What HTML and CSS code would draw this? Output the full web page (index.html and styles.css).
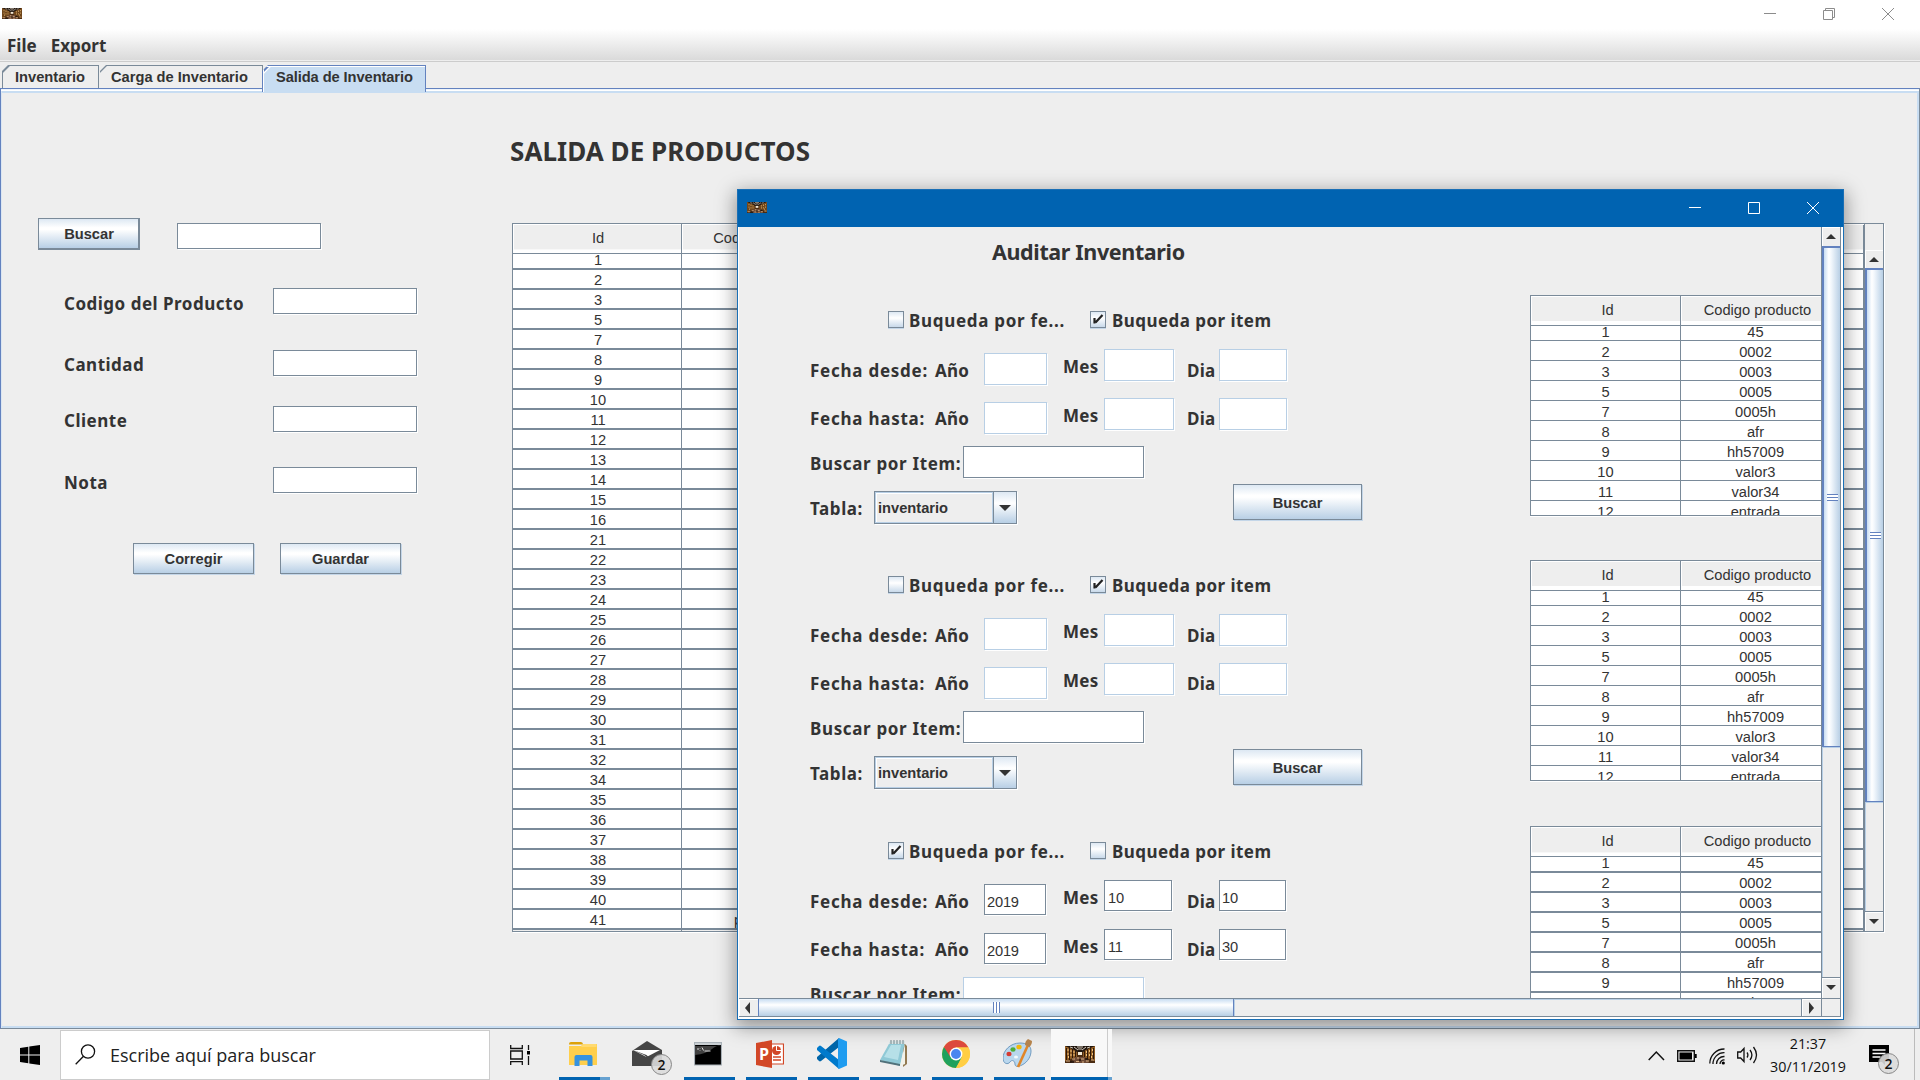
FILE: index.html
```html
<!DOCTYPE html>
<html lang="es">
<head>
<meta charset="utf-8">
<title>Inventario</title>
<link rel="stylesheet" href="styles.css">
</head>
<body>
<svg class="defs" width="0" height="0" aria-hidden="true">
  <defs>
    <symbol id="photo" viewBox="0 0 30 17" preserveAspectRatio="none">
      <rect width="30" height="17" fill="#4a2b12"/>
      <path d="M0 0l12 5v6L0 15zM30 0L18 5v6l12 4z" fill="#9a6427"/>
      <path d="M0 0h30l-8 3-4 3h-6L8 3z" fill="#1f150e"/>
      <path d="M1.500 2v12M4.500 2v12M7.500 3v10M10.500 5v7M28.500 2v12M25.500 2v12M22.500 3v10M19.500 5v7" stroke="#2e190b" stroke-width="1.200"/>
      <path d="M2.500 4h1M5.500 5h1M8.500 6h1M2.500 8h1M5.500 9h1M8.500 9h1M21 6h1M24 5h1M27 4h1M21 9h1M24 9h1M27 8h1M3 11h1M26 11h1" stroke="#f0c27c" stroke-width="2"/>
      <path d="M9 1l4 3M21 1l-4 3M13 3h4M12 1h6M5 1l3 1M25 1l-3 1" stroke="#e9dfd0" stroke-width=".9"/>
      <path d="M13 6h4v3h-4z" fill="#f3ead6"/>
      <path d="M10 11h10l4 6H6z" fill="#6d4a35"/>
      <path d="M1 15h4M7 13h3M12 12h2M16 13h3M21 15h3M26 14h3M11 15.500h3M17 16h2" stroke="#d8b083" stroke-width="1.200"/>
      <path d="M5 16h4M14 14h2M20 13h3" stroke="#20130b" stroke-width="1.500"/>
    </symbol>
  </defs>
</svg>

<main class="window">
  <header class="titlebar">
    <svg class="title-icon" width="20" height="11"><use href="#photo"/></svg>
    <div class="window-buttons">
      <svg width="12" height="12" viewBox="0 0 12 12"><path d="M0 5.5h12"/></svg>
      <svg width="12" height="12" viewBox="0 0 12 12"><path d="M.5 2.500h9v9h-9zM2.500 2V.5h9v9H10"/></svg>
      <svg width="12" height="12" viewBox="0 0 12 12"><path d="M0 0l12 12M12 0L0 12"/></svg>
    </div>
  </header>
  <nav class="menubar"><span>File</span><span>Export</span></nav>
  <div class="tabs">
    <div class="tab tab-first">Inventario</div>
    <div class="tab tab-second">Carga de Inventario</div>
    <div class="tab tab-active">Salida de Inventario</div>
  </div>

  <div class="panel">
    <form class="entry-form">
      <div class="entry-search"><button type="button" class="btn btn-default">Buscar</button><span class="field"></span></div>
      <div class="entry-row row-code"><label>Codigo del Producto</label><span class="field"></span></div>
      <div class="entry-row row-amount"><label>Cantidad</label><span class="field"></span></div>
      <div class="entry-row row-client"><label>Cliente</label><span class="field"></span></div>
      <div class="entry-row row-note"><label>Nota</label><span class="field"></span></div>
      <div class="entry-actions"><button type="button" class="btn">Corregir</button><button type="button" class="btn">Guardar</button></div>
    </form>

    <section class="products">
      <h1>SALIDA DE PRODUCTOS</h1>
      <div class="product-scroll">
        <div class="product-table" id="products"></div>
        <div class="vscroll product-bar">
          <div class="corner"></div>
          <div class="arrow"><i class="tri up"></i></div>
          <div class="thumb"><i class="grip"></i></div>
          <div class="track"></div>
          <div class="arrow arrow-end"><i class="tri down"></i></div>
        </div>
      </div>
    </section>
  </div>
</main>

<div class="dialog">
  <header class="dialog-title">
    <svg class="title-icon" width="20" height="11"><use href="#photo"/></svg>
    <div class="window-buttons">
      <svg width="12" height="12" viewBox="0 0 12 12"><path d="M0 5.500h12"/></svg>
      <svg width="12" height="12" viewBox="0 0 12 12"><path d="M.5.5h11v11H.5z"/></svg>
      <svg width="12" height="12" viewBox="0 0 12 12"><path d="M0 0l12 12M12 0L0 12"/></svg>
    </div>
  </header>
  <div class="dialog-body">
    <div class="viewport">
      <h2>Auditar Inventario</h2>
      <div id="audits"></div>
    </div>
    <div class="vscroll dialog-v">
      <div class="arrow"><i class="tri up"></i></div>
      <div class="thumb"><i class="grip"></i></div>
      <div class="track"></div>
      <div class="arrow arrow-end"><i class="tri down"></i></div>
    </div>
    <div class="hscroll">
      <div class="arrow"><i class="tri left"></i></div>
      <div class="thumb"><i class="grip"></i></div>
      <div class="track"></div>
      <div class="arrow arrow-end"><i class="tri right"></i></div>
    </div>
    <div class="scroll-corner"></div>
  </div>
</div>

<footer class="taskbar">
  <div class="start"><svg width="20" height="20" viewBox="0 0 20 20"><path d="M0 3l8.300-1.200v7.700H0zM9.300 1.600L20 0v9.500H9.300zM0 10.500h8.300v7.800L0 17zM9.300 10.500H20V20L9.300 18.400z"/></svg></div>
  <div class="search">
    <svg width="21" height="21" viewBox="0 0 21 21"><circle cx="13" cy="7.500" r="6.600"/><path d="M8.500 12.300L.7 20.300"/></svg>
    <span>Escribe aquí para buscar</span>
  </div>
  <div class="task-view"><svg width="20" height="20" viewBox="0 0 20 20"><path d="M.7 0v3.500h11.600V0M.7 6h11.600v8H.7zM.7 20v-3.300h11.600V20M18.500 0v5M18.500 11v9"/><path d="M17 6h3v3.500h-3z" fill="#000" stroke="none"/></svg></div>

  <div class="app app-folder running grouped">
    <svg width="28" height="24" viewBox="0 0 28 24"><path d="M0 2q0-2 2-2h10q2 0 2 2.500H0z" fill="#dca10a"/><path d="M0 4h12l2-2h14v21H0z" fill="#ffcf4c"/><path d="M14 2h13.500v3H12z" fill="#ffda70"/><path d="M5.500 24v-9q0-2 2-2h14q2 0 2 2v9h-5v-5.500h-8V24z" fill="#3592df"/></svg>
  </div>
  <div class="app app-mail">
    <svg width="32" height="26" viewBox="0 0 32 26"><path d="M0 10L15 0l15 9v16H0z" fill="#454545"/><path d="M1 9h27L14.500 16z" fill="#fff"/><path d="M1 9l13.500 5L26 25 12 14z" fill="#454545"/></svg>
    <b class="badge">2</b>
  </div>
  <div class="app running">
    <svg width="28" height="24" viewBox="0 0 28 24"><path d="M.5.5h27v22.500H.5z" fill="#000" stroke="#a9b1b7" stroke-width="1.200"/><path d="M1 1h26v2H1z" fill="#c9cfd3"/><path d="M1 13Q12 12 18 7t9-3v0H1z" fill="#414141"/><path d="M4 6v2M6 6v.5M6 8v.5M8 5.500L9.500 8.500M10.500 9h6" stroke="#ddd" fill="none"/></svg>
  </div>
  <div class="app running">
    <svg width="28" height="28" viewBox="0 0 28 28"><path d="M15 4h12.500v20H15z" fill="#fff" stroke="#d24726" stroke-width="1.200"/><path d="M17 17h8M17 20h8" stroke="#d24726" stroke-width="1.500"/><circle cx="20.500" cy="10.500" r="4.500" fill="#d24726"/><path d="M20.500 10.500V6M20.500 10.500h4.500" stroke="#fff"/><path d="M0 3l16-3v28L0 25z" fill="#d24726"/></svg>
    <b class="ppt">P</b>
  </div>
  <div class="app running">
    <svg width="30" height="31" viewBox="0 0 30 31"><path d="M22 0v9L4 23q-1 .8-2 0l-2-2q-.6-1 0-2z" fill="#0065a9"/><path d="M22 31v-9L4 8q-1-.8-2 0L0 10q-.6 1 0 2z" fill="#007acc"/><path d="M22 0l8 3.500v24L22 31q-1-1-1-2V2q0-1 1-2z" fill="#1f9cf0"/></svg>
  </div>
  <div class="app running">
    <svg width="28" height="28" viewBox="0 0 28 28"><path d="M23 2l4 4v18l-4 3z" fill="#927a52"/><path d="M10 2h15l-5 24L0 20z" fill="#8fc9d6"/><path d="M11 5h10l-3 15L4 17z" fill="#b6e0e8"/><path d="M0 20l20 4v2L0 22z" fill="#50717a"/><path d="M10 1h15v3H9z" fill="#d9e4e5"/><path d="M11 0v4M14 0v4M17 0v4M20 0v4M23 0v4" stroke="#71858a"/><path d="M25 4v20l-5 2z" fill="#f2f2ea"/></svg>
  </div>
  <div class="app running">
    <svg width="28" height="28" viewBox="0 0 28 28"><circle cx="14" cy="14" r="14" fill="#ffce44"/><path d="M14 14L1.900 7A14 14 0 0 0 14 28l6-10.500z" fill="#1fa15d"/><path d="M14 7.500h12.400A14 14 0 0 0 1.900 7L8.400 17z" fill="#dc4a3e"/><path d="M14 28a14 14 0 0 0 12.400-20.500H14L19.600 17.500z" fill="#ffce44"/><circle cx="14" cy="14" r="6.400" fill="#fff"/><circle cx="14" cy="14" r="5" fill="#4a86f0"/></svg>
  </div>
  <div class="app running">
    <svg width="30" height="29" viewBox="0 0 30 29"><path d="M17 4C7 4 0 12 0 19c0 6 5 7 7 4s5-1 5 2 3 3 7 1c6-3 9-9 9-14 0-6-5-8-11-8z" fill="#b9d7ee" stroke="#719bc0"/><ellipse cx="6" cy="15" rx="2.600" ry="2.200" fill="#d63b32"/><ellipse cx="10" cy="10.500" rx="2.600" ry="2.200" fill="#4fae3a"/><ellipse cx="16" cy="8" rx="2.700" ry="2.300" fill="#f2b70b"/><ellipse cx="13" cy="18" rx="2" ry="1.500" fill="#f4fafd"/><path d="M15 28L25 6" stroke="#e08628" stroke-width="2.600"/><path d="M22 6q0-4 3-6l4 2q0 4-3 6z" fill="#b5834c"/></svg>
  </div>
  <div class="app app-current running grouped">
    <svg width="30" height="17"><use href="#photo"/></svg>
  </div>

  <div class="tray">
    <svg width="17" height="11" viewBox="0 0 17 11"><path d="M.7 10L8.300 2l7.700 8" stroke-width="1.500"/></svg>
    <svg width="20" height="12" viewBox="0 0 20 12"><path d="M.7.7h16.600v10.600H.7z" stroke-width="1.400"/><path d="M2.500 2.500h12.500v7H2.500zM18 4h1.700v4H18z" fill="#000" stroke="none"/></svg>
    <svg width="17" height="17" viewBox="0 0 17 17"><path d="M.8 15.500A14.500 14.500 0 0 1 15.500 1M4 16A11 11 0 0 1 15.500 4.700M7.500 16a7.500 7.500 0 0 1 8-7.500M11 16a4 4 0 0 1 4.500-4"/><circle cx="14.300" cy="15" r="1.600" fill="#000" stroke="none"/></svg>
    <svg width="21" height="18" viewBox="0 0 21 18"><path d="M.7 6h3L7 2.500v13L3.700 12h-3zM10 6.500q1.800 2.500 0 5M13 4q3.800 5 0 10M16.500 1q6 8 0 16"/></svg>
    <div class="clock"><span>21:37</span><span>30/11/2019</span></div>
    <div class="notice">
      <svg width="20" height="20" viewBox="0 0 20 20"><path d="M0 0h20v17h-4v3l-3-3H0z" fill="#000" stroke="none"/><path d="M3.500 5h13M3.500 8.500h13M3.500 12h8" stroke="#fff" stroke-width="1.300"/></svg>
      <b class="badge">2</b>
    </div>
    <i class="desktop-edge"></i>
  </div>
</footer>
<script src="app.js"></script>
</body>
</html>
```
FILE: styles.css
```css
* { box-sizing: border-box; }
body {
  margin: 0; width: 1920px; height: 1080px; overflow: hidden;
  display: flex; flex-direction: column;
  background: #eee; color: #333;
  font: 14.67px/20px "Liberation Sans", Arial, sans-serif;
}
.defs { position: absolute; }
h1, h2 { margin: 0; font-family: "Noto Sans", sans-serif; font-weight: 700; white-space: nowrap; }
label, .menubar { font: 700 17px/20px "Noto Sans", sans-serif; white-space: nowrap; }
label { letter-spacing: .5px; }

/* main window frame */
.window { height: 1029px; flex: none; display: flex; flex-direction: column; }
.titlebar { height: 29px; flex: none; background: #fff; display: flex; justify-content: space-between; padding: 8px 26px 0 2px; }
.titlebar .window-buttons { gap: 47px; stroke: #8c8c8c; }
.window-buttons { display: flex; fill: none; stroke-width: 1; }
.menubar { height: 33px; flex: none; display: flex; gap: 14px; padding: 7px 0 0 7px; background: linear-gradient(#fff, #dadada 31px, #eee 31px, #eee 32px, #ccc 32px); }
.tabs { height: 26px; flex: none; display: flex; align-items: flex-end; padding-left: 2px; }
.tab { height: 23px; border: 1px solid #7a8a99; border-bottom: 0; font-weight: 700; line-height: 23px; white-space: nowrap; background: linear-gradient(135deg, #7a8a99 4.6px, #eee 5.2px); clip-path: polygon(6px 0, 100% 0, 100% 100%, 0 100%, 0 6px); }
.tab-first { width: 97px; padding-left: 12px; }
.tab-second { width: 163px; margin-left: 1px; padding-left: 11px; border-left: 0; }
.tab-active { width: 164px; height: 27px; margin: 0 0 -4px -1px; padding-left: 13px; background: linear-gradient(135deg, #6382bf 4.600px, #fff 5.200px, #fff 6px, #c8ddf2 6.500px); border-color: #6382bf; box-shadow: inset 1px 1px #fff; letter-spacing: -.08px; z-index: 1; }
.panel { flex: 1; min-height: 0; display: flex; border: 1px solid #6382bf; border-right-color: #7a8a99; border-bottom-color: #7a8a99; box-shadow: inset 0 1px #eef4fb, inset 0 2px #fff, inset 1px 0 #dbe6f2, inset 0 4px #c8ddf2, inset -2px -2px #c8ddf2; }

/* entry form */
.entry-form { width: 509px; flex: none; padding-top: 129px; }
.field { display: block; background: #fff; border: 1px solid #7a8a99; box-shadow: 1px 1px #fff; padding: 0 2px; }
.entry-form .field { width: 144px; height: 26px; }
.btn { padding: 1px 0 0; border: 1px solid #7a8a99; font: 700 14.67px/20px "Liberation Sans", Arial, sans-serif; color: #333; background: linear-gradient(#dde8f3, #fff 30%, #fff 36%, #b8cfe5); box-shadow: 1px 1px #c4d6e8; }
.btn-default { border-width: 1px 2px 2px 1px; box-shadow: none; padding-left: 1px; }
.entry-search { display: flex; height: 70px; padding-left: 37px; gap: 37px; }
.entry-search .btn { width: 102px; height: 32px; }
.entry-search .field { margin-top: 5px; }
.entry-row { display: grid; grid-template-columns: 209px 144px; padding-left: 63px; }
.entry-row label { padding-top: 6px; }
.row-code { height: 62px; }
.row-amount { height: 56px; }
.row-client { height: 61px; }
.row-client label { padding-top: 5px; }
.row-amount label { padding-top: 5px; }
.row-note { height: 76px; }
.entry-actions { display: flex; gap: 26px; padding-left: 132px; }
.entry-actions .btn { width: 121px; height: 31px; }

/* product list */
.products { padding-top: 44px; }
h1 { font-size: 26px; line-height: 36px; letter-spacing: .05px; }
.product-scroll { width: 1372px; height: 709px; margin: 54px 0 0 2px; display: flex; border: 1px solid #7a8a99; box-shadow: 1px 1px #fff; overflow: hidden; }
.product-table { width: 1352px; flex: none; border-right: 2px solid #7a8a99; }
.trow { display: grid; height: 20px; border-bottom: 2px solid #7a8a99; background: #fff; text-align: center; line-height: 21px; }
.trow span { border-right: 1px solid #7a8a99; white-space: nowrap; }
.thead { display: grid; height: 26px; text-align: center; line-height: 29px; border-bottom: 1px solid #f8f8f8; }
.thead span { border: solid #7a8a99; border-width: 0 1px 1px 0; box-shadow: inset 1px 1px #fff; white-space: nowrap; padding-left: 2px; }
.product-table .trow, .product-table .thead { grid-template-columns: repeat(8, 169px); }
.product-table .trow span:first-child { padding-left: 2px; }
.product-table .tail { padding-right: 56px; }

/* scroll bars */
.vscroll { display: flex; flex-direction: column; }
.product-bar { width: 18px; }
.corner { height: 26px; flex: none; }
.arrow { flex: none; height: 18px; display: grid; place-items: center; background: #eee; box-shadow: inset 1px 1px #fff; }
.vscroll .thumb { flex: none; display: grid; place-items: center; border: solid #6382bf; border-width: 2px 0 1px 2px; background: linear-gradient(90deg, #c8ddf2, #fff 30%, #f2f7fc 45%, #b8cfe5); }
.product-bar .thumb { height: 534px; }
.track { flex: 1; background: #eee; box-shadow: inset 1px 1px #b8cfe5; }
.vscroll .arrow-end { border-top: 1px solid #7a8a99; height: 20px; }
.tri { border: 5px solid transparent; }
.up { border-top: 0; border-bottom: 5px solid #333; }
.down { border-bottom: 0; border-top: 5px solid #333; }
.left { border-left: 0; border-right: 5px solid #333; }
.right { border-right: 0; border-left: 5px solid #333; }
.vscroll .grip { width: 11px; height: 7px; background: repeating-linear-gradient(#6382bf 0 1px, #fff 1px 3px); }

/* audit dialog, floating above the main window */
.dialog { position: absolute; left: 737px; top: 189px; width: 1107px; height: 831px; border: 1px solid #1a6fb5; background: #fff; box-shadow: 0 5px 18px 2px rgba(0, 0, 0, .38); display: flex; flex-direction: column; }
.dialog-title { height: 37px; flex: none; background: #0063b1; display: flex; justify-content: space-between; padding: 12px 24px 0 9px; }
.dialog-title .window-buttons { gap: 47px; stroke: #fff; }
.dialog-body { flex: 1; min-height: 0; display: grid; grid-template: 771px 19px / 1082px 20px; padding-left: 1px; }
.viewport { overflow: hidden; background: #eee; }
h2 { height: 84px; padding: 10px 0 0 253px; font-size: 21.5px; line-height: 30px; letter-spacing: -.37px; }
.audit { display: flex; height: 265px; }
.audit + .audit { height: 266px; }
.audit-form { width: 791px; flex: none; }
.checks { display: flex; height: 38px; padding-left: 149px; }
.check { width: 16px; height: 17px; border: 1px solid #7a8a99; background: linear-gradient(#dde8f3, #fff 40%, #c8d9ea); box-shadow: 0 1px #c4d6e8; fill: none; stroke: #222; stroke-width: 2.2; }
.checks label { line-height: 20px; padding-left: 5px; width: 186px; letter-spacing: .7px; }
.checks label:last-child { padding-left: 6px; letter-spacing: .45px; }
.date-row { display: grid; grid-template-columns: 125px 49px 79px 41px 83px 32px 68px; align-items: start; padding-left: 71px; }
.date-row label { padding-top: 12px; letter-spacing: .75px; }
.date-row label:nth-child(n+2) { letter-spacing: .25px; }
.date-row label:nth-child(4) { padding-top: 8px; }
.date-row .field { height: 32px; line-height: 34px; letter-spacing: -.2px; }
.date-row .field:nth-child(3) { width: 63px; margin-top: 4px; }
.date-row .field:nth-child(5) { width: 70px; }
.date-row .field:not(.off) { height: 31px; width: 67px; }
.date-row .field:not(.off):nth-child(3) { width: 62px; }
.date-row .field:not(.off):nth-child(5) { width: 68px; padding-left: 3px; }
.from { height: 49px; }
.to { height: 48px; }
.to label { padding-top: 11px; }
.date-row .field.off, .off { border-color: #b8cfe5; }
.item-row { display: grid; grid-template-columns: 153px 181px; height: 38px; padding-left: 71px; }
.item-row label { padding-top: 8px; letter-spacing: .65px; }
.item-row .field { height: 32px; }
.table-row { display: flex; align-items: flex-start; padding-left: 71px; }
.table-row label { width: 64px; padding-top: 15px; letter-spacing: .6px; }
.table-row .btn { width: 129px; height: 36px; margin-left: 216px; }
.combo { width: 143px; height: 33px; margin-top: 7px; display: flex; border: 1px solid #7a8a99; box-shadow: 1px 1px #fff; font-weight: 700; }
.combo-text { width: 118px; border: 1px solid #b8cfe5; box-shadow: inset 1px 1px #fff; padding-left: 2px; line-height: 30px; }
.combo-arrow { flex: 1; display: grid; place-items: center; border-left: 1px solid #7a8a99; background: linear-gradient(#dde8f3, #fff 36%, #b8cfe5); }
.combo-arrow .tri { border-width: 6px 6px 0; }
.audit-table { width: 291px; height: 221px; margin-top: -16px; overflow: hidden; border: solid #7a8a99; border-width: 1px 0 1px 1px; box-shadow: 0 1px #fff; }
.audit-table .trow, .audit-table .thead { grid-template-columns: 150px 150px; }
.audit-table .trow { border-bottom-width: 1px; line-height: 22px; }
.audit-table .thead { height: 25px; border-bottom: 0; }
.audit-table .thead span { padding-left: 4px; }
.audit-table.heavy .thead { height: 26px; border-bottom: 1px solid #f8f8f8; }
.audit-table.heavy .trow { border-bottom-width: 2px; line-height: 21px; }
.dialog-v { border: solid #7a8a99; border-width: 0 1px 0 1px; }
.dialog-v .arrow { height: 19px; }
.dialog-v .arrow .tri { margin-right: 1px; }
.dialog-v .arrow-end { height: 21px; padding-bottom: 2px; }
.dialog-v .thumb { height: 501px; }
.hscroll { display: flex; border-top: 1px solid #7a8a99; border-bottom: 1px solid #7a8a99; }
.hscroll .arrow { width: 19px; height: 17px; padding-right: 2px; }
.hscroll .thumb { width: 476px; display: grid; place-items: center; border: solid #6382bf; border-width: 0 1px 0 1px; background: linear-gradient(#c8ddf2, #fff 35%, #f2f7fc 45%, #b8cfe5); }
.hscroll .grip { width: 7px; height: 11px; background: repeating-linear-gradient(90deg, #6382bf 0 1px, #fff 1px 3px); }
.hscroll .arrow-end { width: 20px; padding: 0; border-left: 1px solid #7a8a99; }
.hscroll .tri { border-top-width: 6px; border-bottom-width: 6px; }
.scroll-corner { background: #eee; border: 1px solid #7a8a99; }

/* taskbar */
.taskbar { flex: 1; display: flex; background: #eee; color: #222; }
.start { width: 60px; padding: 16px 0 0 20px; }
.search { width: 430px; margin-top: 1px; border: 1px solid #ccc; background: #fff; display: flex; padding: 13px 0 0 14px; gap: 14px; font: 18px/23px "Open Sans", sans-serif; }
.search svg, .task-view svg, .tray svg { fill: none; stroke: #111; stroke-width: 1.3; }
.task-view { width: 63px; padding: 16px 0 0 20px; }
.app { position: relative; width: 51px; margin-right: 11px; display: grid; place-items: center; padding: 1px 3px 0 0; }
.app.running { border-bottom: 3px solid #0063b1; }
.app svg { display: block; }
.app-folder { margin-left: 6px; margin-right: 10px; }
.app-mail { margin-right: 13px; padding: 0 0 2px 4px; }
.app-folder::after, .app-current::after { content: ""; position: absolute; right: 0; bottom: -3px; width: 10px; height: 3px; background: #66a1d0; }
.app-current { width: 61px; margin: 0 0 0 -5px; background: linear-gradient(90deg, #f8f8f8 56px, #ccc 56px 57px, #f8f8f8 57px); padding: 2px 4px 0 0; }
.app-current::after { width: 4px; }
.badge { position: absolute; width: 21px; height: 21px; border: 1px solid #888; border-radius: 50%; background: rgba(218, 218, 218, .9); color: #111; font: 600 14px/19px "Open Sans", sans-serif; text-align: center; }
.app-mail .badge { right: -1px; top: 25px; }
.ppt { position: absolute; left: 13px; top: 15px; color: #fff; font: 700 16px/20px "Open Sans", sans-serif; }
.tray { margin-left: auto; display: flex; }
.tray > svg { margin: 21px 12px 0 0; }
.tray > svg:nth-child(3) { margin: 19px 11px 0 0; }
.tray > svg:nth-child(4) { margin: 17px 12px 0 0; }
.clock { width: 76px; display: flex; flex-direction: column; align-items: center; padding-top: 3px; font: 14.3px/23px "Open Sans", sans-serif; color: #111; }
.notice { position: relative; width: 45px; margin-left: 23px; padding-top: 16px; }
.notice .badge { left: 9px; top: 24px; }
.desktop-edge { width: 6px; border-left: 1px solid #bbb; }
```
FILE: app.js
```js
const productIds = [1, 2, 3, 5, 7, 8, 9, 10, 11, 12, 13, 14, 15, 16, 21, 22, 23, 24, 25, 26, 27, 28, 29, 30, 31, 32, 34, 35, 36, 37, 38, 39, 40, 41];
const blank = '<span></span>'.repeat(6);
document.getElementById('products').innerHTML =
  `<div class="thead"><span>Id</span><span>Codigo producto</span>${blank}</div>` +
  productIds.map(id => `<div class="trow"><span>${id}</span><span class="tail">${id === 41 ? 'p' : ''}</span>${blank}</div>`).join('');

const stock = [[1, '45'], [2, '0002'], [3, '0003'], [5, '0005'], [7, '0005h'], [8, 'afr'], [9, 'hh57009'], [10, 'valor3'], [11, 'valor34'], [12, 'entrada']];
const audits = [
  { byDate: false, from: ['', '', ''], to: ['', '', ''] },
  { byDate: false, from: ['', '', ''], to: ['', '', ''] },
  { byDate: true, from: ['2019', '10', '10'], to: ['2019', '11', '30'] }
];
const check = on => `<svg class="check" viewBox="0 0 14 15">${on ? '<path d="M3.500 6v5.500M4.500 10.500l7-7.500"/>' : ''}</svg>`;
const dates = (cls, name, values, on) => {
  const field = v => `<span class="field${on ? '' : ' off'}">${v}</span>`;
  return `<div class="date-row ${cls}"><label>${name}</label><label>Año</label>${field(values[0])}<label>Mes</label>${field(values[1])}<label>Dia</label>${field(values[2])}</div>`;
};
document.getElementById('audits').innerHTML = audits.map(a => `
  <section class="audit">
    <div class="audit-form">
      <div class="checks">${check(a.byDate)}<label>Buqueda por fe...</label>${check(!a.byDate)}<label>Buqueda por item</label></div>
      ${dates('from', 'Fecha desde:', a.from, a.byDate)}
      ${dates('to', 'Fecha hasta:', a.to, a.byDate)}
      <div class="item-row"><label>Buscar por Item:</label><span class="field${a.byDate ? ' off' : ''}"></span></div>
      <div class="table-row"><label>Tabla:</label><div class="combo"><span class="combo-text">inventario</span><span class="combo-arrow"><i class="tri down"></i></span></div><button type="button" class="btn">Buscar</button></div>
    </div>
    <div class="audit-table${a.byDate ? ' heavy' : ''}">
      <div class="thead"><span>Id</span><span>Codigo producto</span></div>
      ${stock.map(r => `<div class="trow"><span>${r[0]}</span><span>${r[1]}</span></div>`).join('')}
    </div>
  </section>`).join('');
```
